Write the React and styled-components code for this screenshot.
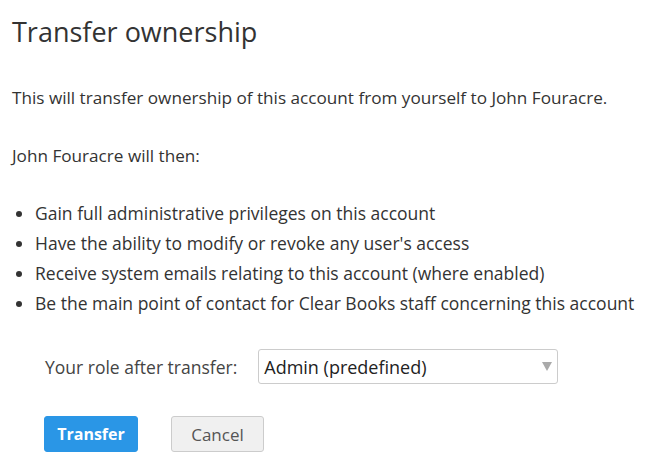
import React from 'react'
import styled, { createGlobalStyle } from 'styled-components'

const GlobalStyle = createGlobalStyle`
    html, body {
        margin: 0;
        padding: 0;
        background: #fff;
    }
    body {
        font-family: "Open Sans", "Liberation Sans", sans-serif;
        color: #333;
    }
`

const items = [
    'Gain full administrative privileges on this account',
    "Have the ability to modify or revoke any user's access",
    'Receive system emails relating to this account (where enabled)',
    'Be the main point of contact for Clear Books staff concerning this account',
]

const App = () => {
    return (
        <StDialog>
            <GlobalStyle />
            <StTitle>Transfer ownership</StTitle>
            <StText>This will transfer ownership of this account from yourself to John Fouracre.</StText>
            <StText>John Fouracre will then:</StText>
            <StList>
                {items.map((item) => (
                    <StItem key={item}>{item}</StItem>
                ))}
            </StList>
            <StForm>
                <StLabel>Your role after transfer:</StLabel>
                <StSelect>
                    <span>Admin (predefined)</span>
                    <StCaret />
                </StSelect>
            </StForm>
            <StActions>
                <StButton primary>Transfer</StButton>
                <StButton>Cancel</StButton>
            </StActions>
        </StDialog>
    )
}

export default App

const StDialog = styled.div`
    width: 648px;
    padding: 14px 12px 0 12px;
    box-sizing: border-box;
`
const StTitle = styled.h1`
    margin: 0 0 36px 0;
    font-size: 27px;
    font-weight: 400;
    line-height: 36px;
    color: #333;
`
const StText = styled.p`
    margin: 0 0 34px 0;
    font-size: 17.15px;
    line-height: 24px;
    color: #333;
`
const StList = styled.ul`
    margin: -4px 0 0 0;
    padding: 0 0 0 23px;
    font-size: 17.5px;
    line-height: 30px;
`
const StItem = styled.li`
    padding: 0;
`
const StForm = styled.div`
    display: flex;
    align-items: center;
    gap: 21px;
    margin: 31px 0 0 33px;
`
const StLabel = styled.span`
    font-size: 17.5px;
    line-height: 24px;
    color: #444;
`
const StSelect = styled.div`
    width: 300px;
    height: 35px;
    box-sizing: border-box;
    border: 1px solid #ccc;
    border-radius: 3px;
    display: flex;
    align-items: center;
    justify-content: space-between;
    padding: 0 5px 0 5px;
    font-size: 18px;
    color: #222;
`
const StCaret = styled.span`
    width: 0;
    height: 0;
    border-left: 5px solid transparent;
    border-right: 5px solid transparent;
    border-top: 9px solid #aaa;
`
const StActions = styled.div`
    display: flex;
    gap: 33px;
    margin: 32px 0 0 32px;
`
const StButton = styled.button`
    height: 36px;
    width: ${(p) => (p.primary ? '94px' : '93px')};
    padding: 0;
    box-sizing: border-box;
    border-radius: 3px;
    font-family: "Open Sans", "Liberation Sans", sans-serif;
    font-size: ${(p) => (p.primary ? '16px' : '17px')};
    font-weight: ${(p) => (p.primary ? 700 : 400)};
    color: ${(p) => (p.primary ? '#fff' : '#555')};
    background: ${(p) => (p.primary ? '#2a96e6' : '#f0f0f0')};
    border: 1px solid ${(p) => (p.primary ? '#2a96e6' : '#ccc')};
`
